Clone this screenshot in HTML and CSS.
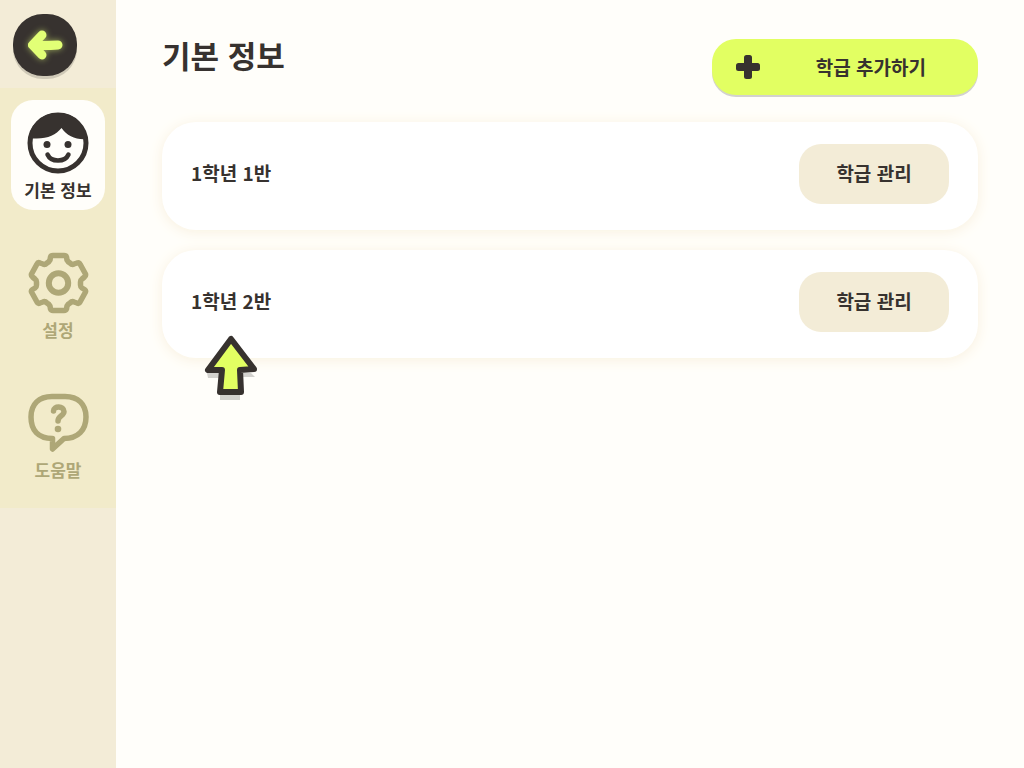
FILE: index.html
```
<!DOCTYPE html>
<html lang="ko">
<head>
    <meta charset="UTF-8">
    <meta name="viewport" content="width=device-width, initial-scale=1.0">
    <title>기본 정보</title>
    <link rel="stylesheet" href="styles.css">
</head>
<body>
    <aside class="sidebar">
        <button class="back" type="button" aria-label="뒤로">
            <svg width="64" height="62" viewBox="0 0 64 62">
                <path d="M29 21 L19.500 31 L29 41 M20 31 Q30 32 45 31" />
            </svg>
        </button>
        <nav class="menu">
            <a href="#info" class="item active">
                <svg width="64" height="64" viewBox="0 0 64 64">
                    <circle cx="32" cy="32" r="28" fill="none" stroke="currentColor" stroke-width="5" />
                    <path d="M3 27 C5 12 17 2 32 2 C47 2 59 12 61 28 C50 29 41 25 35.500 17 C29 25 19 29 3 27 Z" fill="currentColor" />
                    <circle cx="21" cy="33.500" r="3.500" fill="currentColor" />
                    <circle cx="42" cy="33.500" r="3.500" fill="currentColor" />
                    <path d="M21.500 43.500 C25 51.500 39 51.500 42.500 43.500" fill="none" stroke="currentColor" stroke-width="4.500" stroke-linecap="round" />
                </svg>
                <span>기본 정보</span>
            </a>
            <a href="#setting" class="item">
                <svg width="64" height="64" viewBox="0 0 64 64" fill="none" stroke="currentColor" stroke-width="5.500" stroke-linejoin="round">
                    <path d="M27 4.500 H38 Q40 4.500 40.500 6 L41 9 Q42 11 44 12 Q46 14 48 13 L51 12 Q53 11 54 13 L59.500 23 Q60 25 58.500 26 L56 28 Q54.500 29 54.500 31 V34 Q54.500 36 56 37 L58.500 38.500 Q60 39.500 59.500 41 L54 51 Q53 53 51 52 L48 51 Q46 50 44 52 Q42 53 41 55 L40.500 58 Q40 59.500 38 59.500 H27 Q25 59.500 24.500 58 L24 55 Q23 53 21 52 Q19 50 17 51 L14 52 Q12 53 11 51 L5.500 41 Q5 39.500 6.500 38.500 L9 37 Q10.500 36 10.500 34 V31 Q10.500 29 9 28 L6.500 26 Q5 25 5.500 23 L11 13 Q12 11 14 12 L17 13 Q19 14 21 12 Q23 11 24 9 L24.500 6 Q25 4.500 27 4.500 Z" />
                    <circle cx="32.500" cy="32" r="9.700" stroke-width="6" />
                </svg>
                <span>설정</span>
            </a>
            <a href="#help" class="item">
                <svg width="64" height="64" viewBox="0 0 64 64" fill="none" stroke="currentColor" stroke-width="5.500" stroke-linecap="round" stroke-linejoin="round">
                    <path d="M26.500 47.500 C12 47.500 5 39 5 26 C5 13 13 5.500 26 5.500 H39 C52 5.500 60 13 60 26 C60 39 52 47.500 38 47.500 L26.500 58 Z" />
                    <path d="M27.500 20 C27.500 14.500 38 14.500 38 20.500 C38 25 32 24.500 32 30" />
                    <circle cx="32" cy="38" r="3.300" fill="currentColor" stroke="none" />
                </svg>
                <span>도움말</span>
            </a>
        </nav>
    </aside>
    <main>
        <header>
            <h1>기본 정보</h1>
            <button class="add" type="button">
                <svg width="24" height="24" viewBox="0 0 24 24">
                    <rect x="8" y="0" width="8" height="24" rx="2.500" />
                    <rect x="0" y="8" width="24" height="8" rx="2.500" />
                </svg>
                <span>학급 추가하기</span>
            </button>
        </header>
        <ul class="class-list">
            <li>
                <span>1학년 1반</span>
                <button type="button">학급 관리</button>
            </li>
            <li>
                <span>1학년 2반</span>
                <button type="button">학급 관리</button>
                <svg class="pointer" width="56" height="68" viewBox="0 0 56 68">
                    <path d="M4 38 H48 L52 42 H39 V60 H37 V65 H17 V60 H18 V43 H5 Z" fill="#d3d2ce" />
                    <path d="M28 4 L5 35 H19 L17 57 H38 L37 35 L51 34 Z" fill="#e2ff62" stroke="#37322f" stroke-width="6" stroke-linejoin="round" />
                </svg>
            </li>
        </ul>
    </main>
</body>
</html>
```

FILE: styles.css
```
*{
    box-sizing: border-box;
}
body{
    margin: 0;
    min-height: 100vh;
    display: flex;
    background-color: #fffefa;
    color: #37322f;
    font-family: "Noto Sans CJK KR", sans-serif;
    font-weight: bold;
}
button{
    border: none;
    padding: 0;
    color: inherit;
    font: inherit;
    cursor: pointer;
}
svg{
    display: block;
}

/* sidebar */
.sidebar{
    width: 116px;
    flex-shrink: 0;
    background-color: #f3ecd7;
}
.back{
    display: block;
    width: 64px;
    height: 62px;
    margin: 14px 13px 12px;
    border-radius: 30px;
    background-color: #37322f;
    box-shadow: 0 3px 0 #cfc9b7;
}
.back path{
    fill: none;
    stroke: #e2ff76;
    stroke-width: 9;
    stroke-linecap: round;
    stroke-linejoin: round;
    filter: drop-shadow(0 0 3px #e2ff7699);
}
.menu{
    display: flex;
    flex-direction: column;
    gap: 30px;
    padding: 12px 11px 18px;
    background-color: #f2ebca;
}
.item{
    height: 110px;
    padding-top: 11px;
    display: flex;
    flex-direction: column;
    align-items: center;
    border-radius: 22px;
    color: #aea777;
    font-size: 17px;
    line-height: 30px;
    text-decoration: none;
}
.item.active{
    background-color: #fffefa;
    color: #37322f;
}

/* content */
main{
    flex: 1;
    padding: 32px 46px;
}
header{
    display: flex;
    justify-content: space-between;
}
h1{
    margin: 0;
    font-size: 31px;
    line-height: 46px;
}
.add{
    width: 266px;
    height: 56px;
    margin-top: 7px;
    padding: 0 52px 0 24px;
    display: flex;
    align-items: center;
    justify-content: space-between;
    border-radius: 24px;
    background-color: #e2ff62;
    box-shadow: 0 2px 0 #d3d2ce;
    font-size: 19px;
}
.add span{
    padding-bottom: 2px;
}
.add svg{
    fill: #37322f;
}
.class-list{
    margin: 27px 0 0;
    padding: 0;
    display: flex;
    flex-direction: column;
    gap: 20px;
    list-style: none;
    font-size: 19px;
}
.class-list li{
    position: relative;
    height: 108px;
    padding: 0 29px;
    display: flex;
    align-items: center;
    justify-content: space-between;
    border-radius: 34px;
    background-color: #fff;
    box-shadow: 0 2px 14px #f9f1df;
}
.class-list span{
    padding-bottom: 8px;
}
.class-list button{
    width: 150px;
    height: 60px;
    margin-bottom: 4px;
    padding-bottom: 4px;
    border-radius: 22px;
    background-color: #f3ecd7;
}
.pointer{
    position: absolute;
    left: 41px;
    top: 85px;
}
```
